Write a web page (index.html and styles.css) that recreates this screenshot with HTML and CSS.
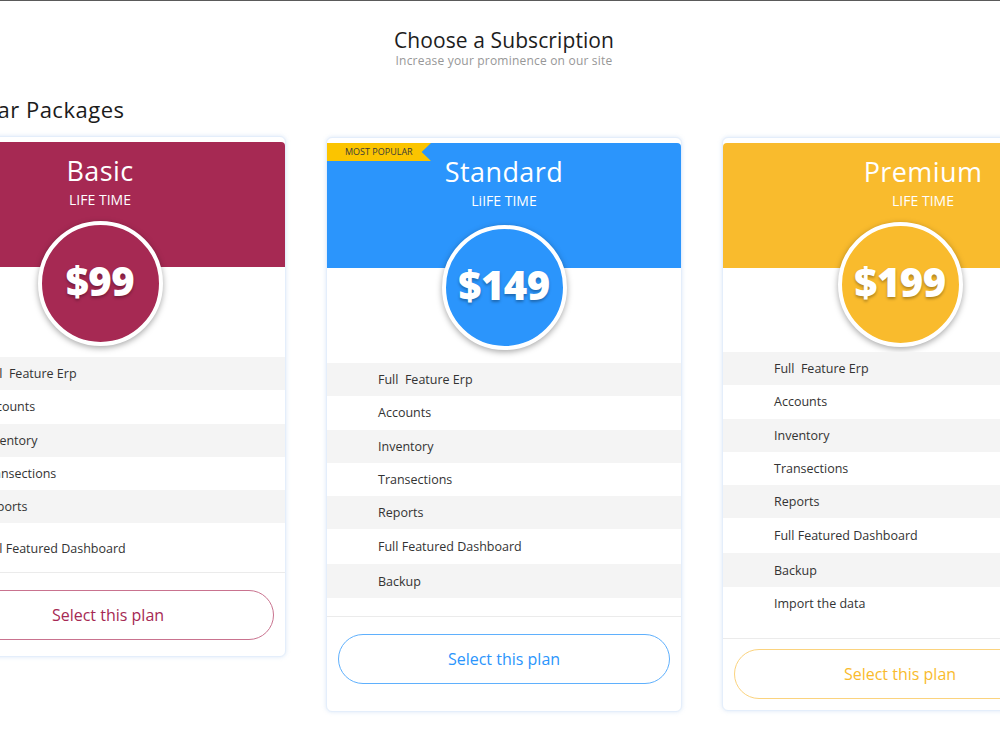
FILE: index.html
```html
<!DOCTYPE html>
<html lang="en">
<head>
<meta charset="utf-8">
<title>Choose a Subscription</title>
<link rel="stylesheet" href="styles.css">
</head>
<body>
<div class="topline"></div>
<main class="page">
  <header class="intro">
    <h1 class="intro__title">Choose a Subscription</h1>
    <p class="intro__sub">Increase your prominence on our site</p>
  </header>
  <h2 class="section-title">Popular Packages</h2>
  <div class="plans">
    <article class="plan plan--basic">
      <div class="plan__head">
        <h3 class="plan__name">Basic</h3>
        <p class="plan__term">LIFE TIME</p>
      </div>
      <div class="plan__price"><span>$99</span></div>
      <ul class="plan__features">
        <li class="row row--alt">Full&nbsp; Feature Erp</li>
        <li class="row">Accounts</li>
        <li class="row row--alt">Inventory</li>
        <li class="row">Transections</li>
        <li class="row row--alt">Reports</li>
        <li class="row row--dash">Full Featured Dashboard</li>
      </ul>
      <div class="plan__foot"><button class="plan__btn">Select this plan</button></div>
    </article>

    <article class="plan plan--standard">
      <div class="ribbon">MOST POPULAR</div>
      <div class="plan__head">
        <h3 class="plan__name">Standard</h3>
        <p class="plan__term">LiIFE TIME</p>
      </div>
      <div class="plan__price"><span>$149</span></div>
      <ul class="plan__features">
        <li class="row row--alt">Full&nbsp; Feature Erp</li>
        <li class="row">Accounts</li>
        <li class="row row--alt">Inventory</li>
        <li class="row">Transections</li>
        <li class="row row--alt">Reports</li>
        <li class="row row--dash">Full Featured Dashboard</li>
        <li class="row row--alt">Backup</li>
      </ul>
      <div class="plan__foot"><button class="plan__btn">Select this plan</button></div>
    </article>

    <article class="plan plan--premium">
      <div class="plan__head">
        <h3 class="plan__name">Premium</h3>
        <p class="plan__term">LIFE TIME</p>
      </div>
      <div class="plan__price"><span>$199</span></div>
      <ul class="plan__features">
        <li class="row row--alt">Full&nbsp; Feature Erp</li>
        <li class="row">Accounts</li>
        <li class="row row--alt">Inventory</li>
        <li class="row">Transections</li>
        <li class="row row--alt">Reports</li>
        <li class="row row--dash">Full Featured Dashboard</li>
        <li class="row row--alt">Backup</li>
        <li class="row">Import the data</li>
      </ul>
      <div class="plan__foot"><button class="plan__btn">Select this plan</button></div>
    </article>
  </div>
</main>
</body>
</html>
```

FILE: styles.css
```css
* { box-sizing: border-box; }

html, body {
  margin: 0;
  padding: 0;
  background: #ffffff;
  overflow: hidden;
}

body {
  font-family: "Open Sans", "Noto Sans", Arial, sans-serif;
  color: #2b2b2b;
  width: 1000px;
  height: 750px;
}

.topline {
  height: 1px;
  background: #5a5a5a;
}

.page {
  width: 1148px;
  margin-left: -70px;
}

.intro {
  text-align: center;
  padding-top: 27px;
}

.intro__title {
  margin: 0;
  font-size: 21px;
  line-height: 24px;
  font-weight: 500;
  color: #1d1d1d;
  letter-spacing: 0.1px;
}

.intro__sub {
  margin: 2px 0 0;
  font-size: 12px;
  line-height: 14px;
  color: #979797;
  letter-spacing: 0.2px;
}

.section-title {
  margin: 28px 0 0 6px;
  font-size: 22px;
  line-height: 26px;
  font-weight: 500;
  color: #1b1b1b;
  letter-spacing: 0.5px;
}

.plans {
  display: flex;
  align-items: flex-start;
  gap: 40px;
  margin-top: 14px;
}

.plan {
  position: relative;
  flex: 0 0 356px;
  border: 1px solid #e4eefb;
  border-radius: 6px;
  box-shadow: 0 0 4px rgba(150, 185, 230, 0.35);
  padding-top: 5px;
  background: #fff;
  --c: #a62953;
  --shift: 0px;
  --circle-top: -46px;
  --list-top: 11px;
  --list-bottom: 18px;
  --btn-top: 17px;
  --btn-bottom: 16px;
  --btn-border: #c56e8b;
  --head-pad-l: 0px;
  --head-pad-r: 0px;
}

.plan--basic {
  --c: #a62953;
  --shift: -8px;
  --head-pad-r: 16px;
  --circle-top: -46px;
  --list-top: 11px;
  --list-bottom: 6px;
  --btn-top: 17px;
  --btn-bottom: 16px;
  --btn-border: #c9738f;
}

.plan--standard {
  --c: #2b95fc;
  --circle-top: -43px;
  --list-top: 13px;
  --list-bottom: 18px;
  --btn-top: 17px;
  --btn-bottom: 27px;
  --btn-border: #5fb0fd;
  margin-top: 1px;
}

.plan--premium {
  --c: #f9bb2d;
  --head-pad-l: 46px;
  --circle-top: -46px;
  --list-top: 5px;
  --list-bottom: 18px;
  --btn-top: 10px;
  --btn-bottom: 11px;
  --btn-border: #fbd37e;
  margin-top: 1px;
}

.plan__head {
  height: 125px;
  background: var(--c);
  border-radius: 4px 4px 0 0;
  color: #fff;
  text-align: center;
  padding: 13px var(--head-pad-r) 0 var(--head-pad-l);
}

.plan__name {
  margin: 0;
  font-size: 27px;
  line-height: 32px;
  font-weight: 500;
  letter-spacing: 0.4px;
}

.plan__term {
  margin: 4px 0 0;
  font-size: 14px;
  line-height: 18px;
  font-weight: 500;
}

.plan__price {
  width: 125px;
  height: 125px;
  margin-top: var(--circle-top);
  margin-left: calc(50% - 62.5px + var(--shift));
  border-radius: 50%;
  border: 4px solid #fff;
  background: var(--c);
  box-shadow: 0 2px 6px rgba(0, 0, 0, 0.35);
  display: flex;
  align-items: center;
  justify-content: center;
  padding-bottom: 6px;
}

.plan__price span {
  font-family: "Open Sans", "Noto Sans", sans-serif;
  font-size: 40px;
  font-weight: 800;
  color: #fff;
  letter-spacing: -0.5px;
  text-shadow: 0 2px 3px rgba(0, 0, 0, 0.3);
}

.plan__features {
  list-style: none;
  margin: var(--list-top) 0 0;
  padding: 0 0 var(--list-bottom);
  border-bottom: 1px solid #ebebeb;
}

.row {
  height: 33.3px;
  display: flex;
  align-items: center;
  padding-left: 51px;
  font-size: 12.5px;
  color: #333;
}

.row--alt {
  background: #f4f4f4;
}

.row--dash {
  height: 35px;
}

.plan--basic .row--dash {
  margin-top: 8px;
}

.plan__foot {
  padding: var(--btn-top) 11px var(--btn-bottom);
}

.plan__btn {
  display: block;
  width: 100%;
  height: 50px;
  border-radius: 25px;
  border: 1px solid var(--btn-border);
  background: #fff;
  color: var(--c);
  font-family: inherit;
  font-size: 16px;
  font-weight: 500;
  cursor: pointer;
}

.ribbon {
  position: absolute;
  top: 5px;
  left: 0;
  width: 104px;
  height: 18px;
  background: #fbc400;
  color: #3a3a3a;
  font-size: 9px;
  font-weight: 500;
  line-height: 18px;
  padding-left: 18px;
  clip-path: polygon(0 0, 100% 0, 91% 50%, 100% 100%, 0 100%);
  z-index: 2;
}
```
